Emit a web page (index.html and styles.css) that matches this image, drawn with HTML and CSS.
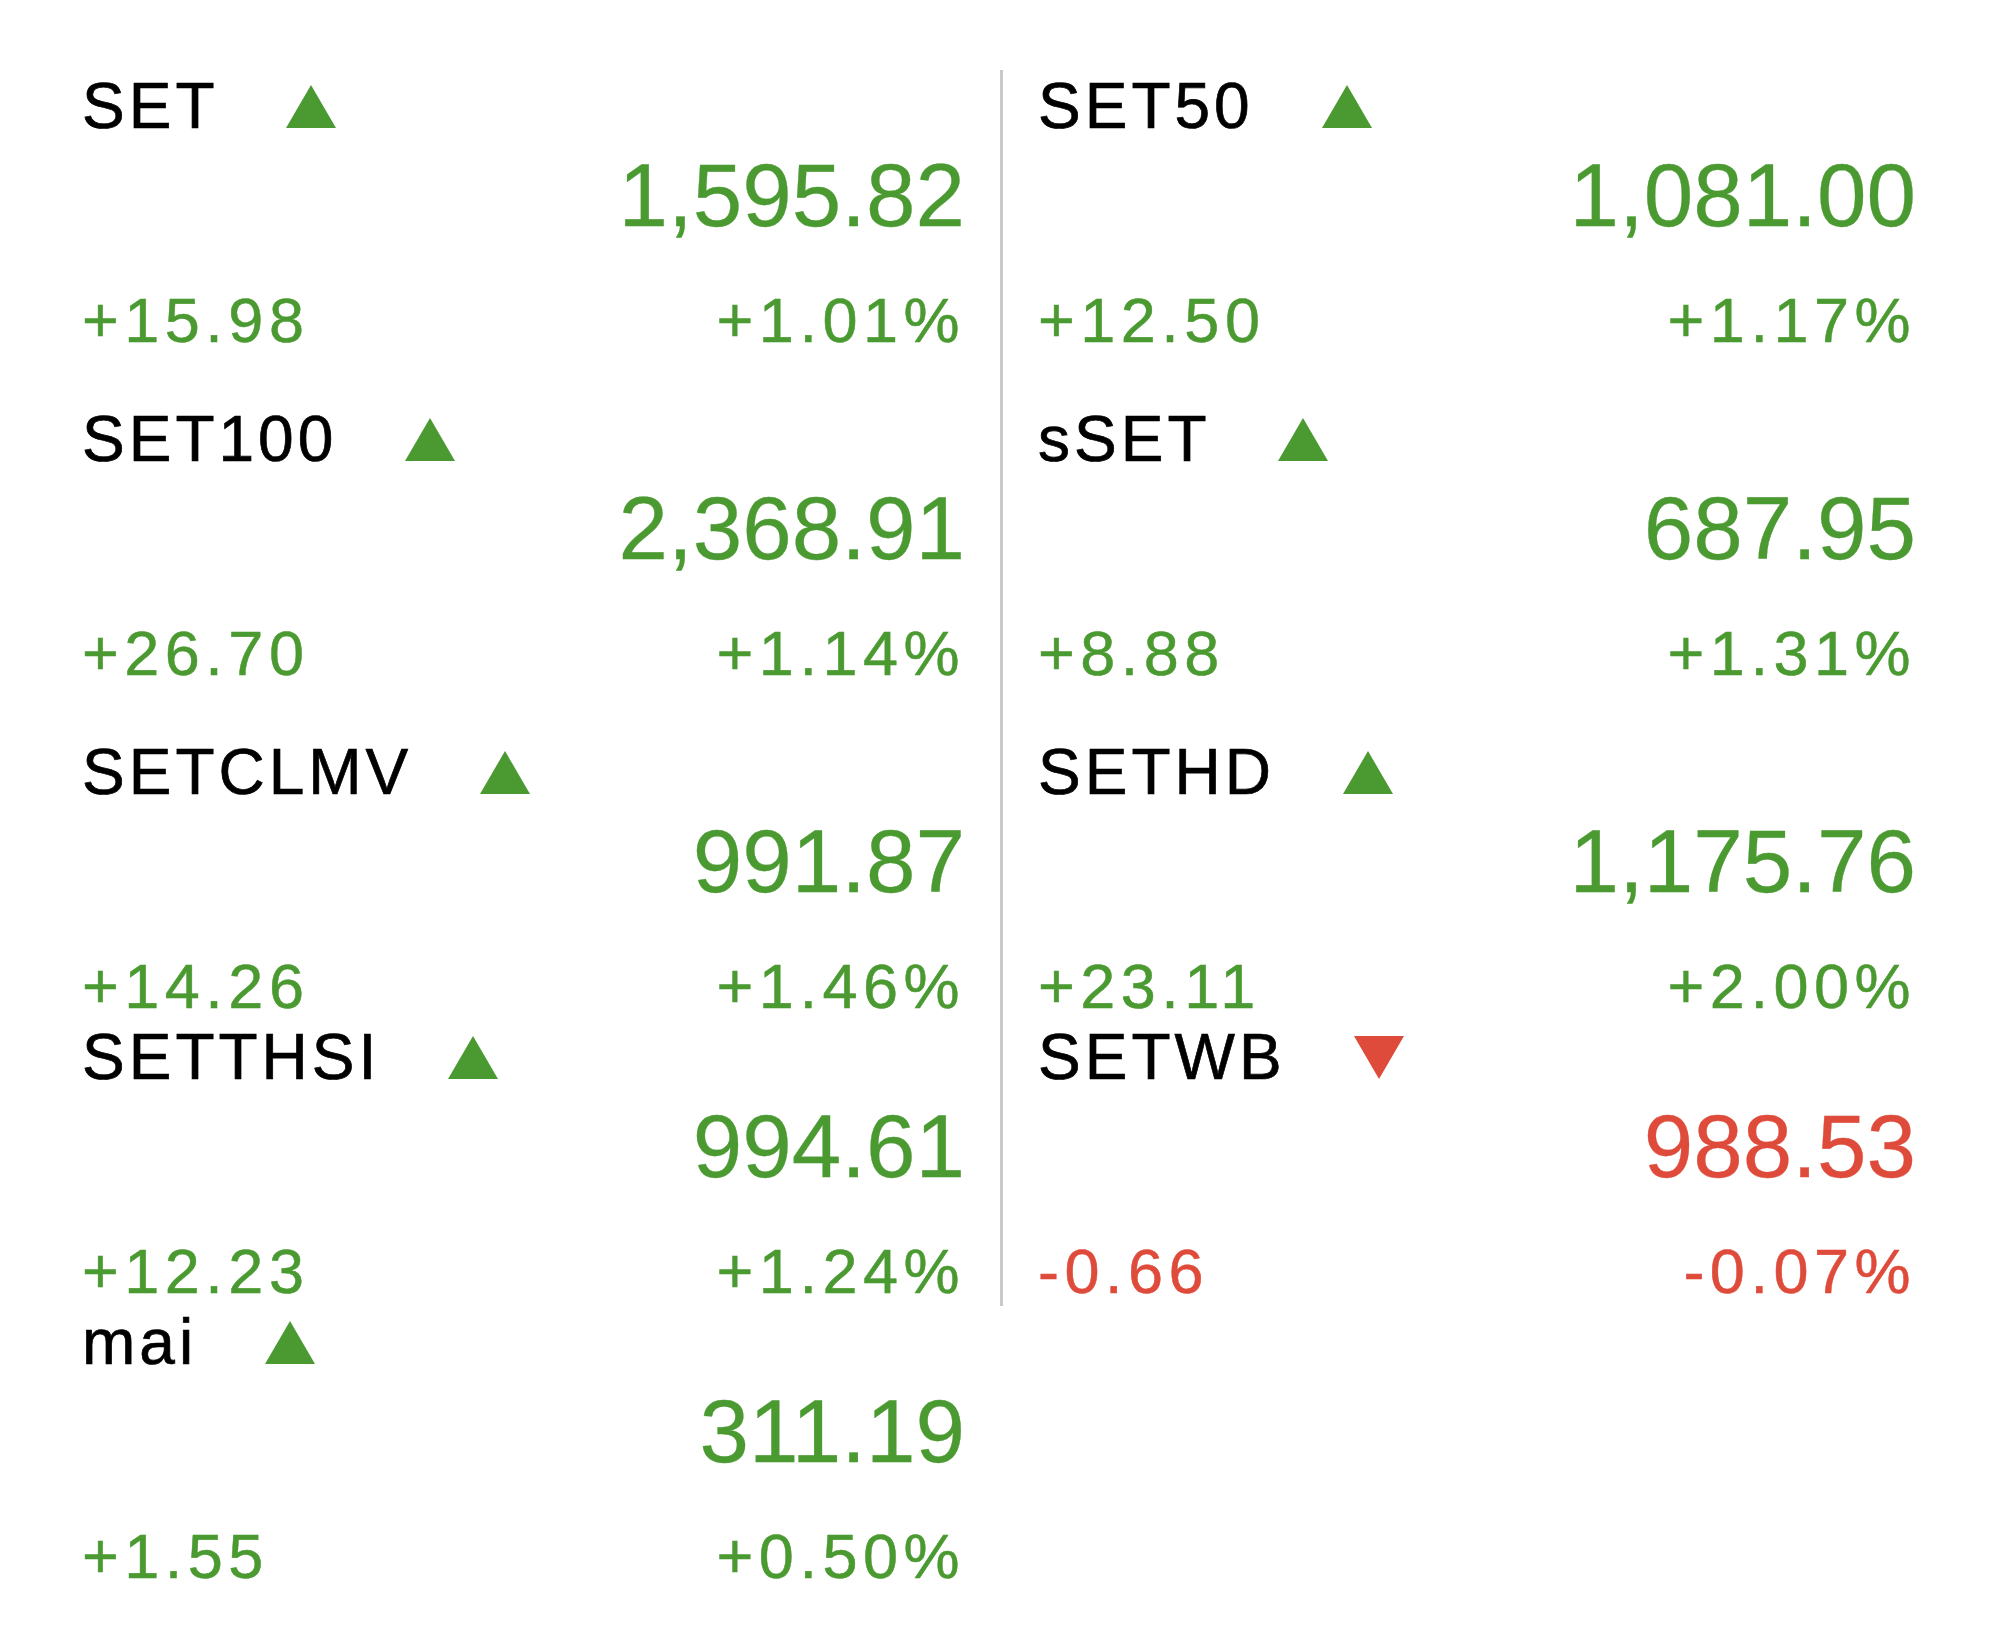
FILE: index.html
```html
<!DOCTYPE html>
<html lang="en">
<head>
<meta charset="utf-8">
<title>SET Indices</title>
<link rel="stylesheet" href="styles.css">
</head>
<body>
<div class="board">
  <div class="col col-left">
    <div class="idx tall up">
      <div class="idx-head"><span class="idx-name">SET</span><svg class="tri" width="50" height="43" viewBox="0 0 50 43"><polygon points="25,0 50,43 0,43"/></svg></div>
      <div class="idx-last">1,595.82</div>
      <div class="idx-chg"><span>+15.98</span><span>+1.01%</span></div>
    </div>
    <div class="idx tall up">
      <div class="idx-head"><span class="idx-name">SET100</span><svg class="tri" width="50" height="43" viewBox="0 0 50 43"><polygon points="25,0 50,43 0,43"/></svg></div>
      <div class="idx-last">2,368.91</div>
      <div class="idx-chg"><span>+26.70</span><span>+1.14%</span></div>
    </div>
    <div class="idx up">
      <div class="idx-head"><span class="idx-name">SETCLMV</span><svg class="tri" width="50" height="43" viewBox="0 0 50 43"><polygon points="25,0 50,43 0,43"/></svg></div>
      <div class="idx-last">991.87</div>
      <div class="idx-chg"><span>+14.26</span><span>+1.46%</span></div>
    </div>
    <div class="idx up">
      <div class="idx-head"><span class="idx-name">SETTHSI</span><svg class="tri" width="50" height="43" viewBox="0 0 50 43"><polygon points="25,0 50,43 0,43"/></svg></div>
      <div class="idx-last">994.61</div>
      <div class="idx-chg"><span>+12.23</span><span>+1.24%</span></div>
    </div>
    <div class="idx up">
      <div class="idx-head"><span class="idx-name">mai</span><svg class="tri" width="50" height="43" viewBox="0 0 50 43"><polygon points="25,0 50,43 0,43"/></svg></div>
      <div class="idx-last">311.19</div>
      <div class="idx-chg"><span>+1.55</span><span>+0.50%</span></div>
    </div>
  </div>
  <div class="col col-right">
    <div class="idx tall up">
      <div class="idx-head"><span class="idx-name">SET50</span><svg class="tri" width="50" height="43" viewBox="0 0 50 43"><polygon points="25,0 50,43 0,43"/></svg></div>
      <div class="idx-last">1,081.00</div>
      <div class="idx-chg"><span>+12.50</span><span>+1.17%</span></div>
    </div>
    <div class="idx tall up">
      <div class="idx-head"><span class="idx-name">sSET</span><svg class="tri" width="50" height="43" viewBox="0 0 50 43"><polygon points="25,0 50,43 0,43"/></svg></div>
      <div class="idx-last">687.95</div>
      <div class="idx-chg"><span>+8.88</span><span>+1.31%</span></div>
    </div>
    <div class="idx up">
      <div class="idx-head"><span class="idx-name">SETHD</span><svg class="tri" width="50" height="43" viewBox="0 0 50 43"><polygon points="25,0 50,43 0,43"/></svg></div>
      <div class="idx-last">1,175.76</div>
      <div class="idx-chg"><span>+23.11</span><span>+2.00%</span></div>
    </div>
    <div class="idx down">
      <div class="idx-head"><span class="idx-name">SETWB</span><svg class="tri" width="50" height="43" viewBox="0 0 50 43"><polygon points="0,0 50,0 25,43"/></svg></div>
      <div class="idx-last">988.53</div>
      <div class="idx-chg"><span>-0.66</span><span>-0.07%</span></div>
    </div>
  </div>
</div>
</body>
</html>
```

FILE: styles.css
```css
html, body {
  margin: 0;
  padding: 0;
  background: #ffffff;
}

body {
  font-family: "Liberation Sans", Arial, Helvetica, sans-serif;
  color: #000000;
}

.board {
  display: flex;
  align-items: flex-start;
  padding: 70px 0 0 82px;
}

.col-left {
  width: 883px;
  margin-right: 35px;
}

.col-right {
  width: 878px;
  border-left: 3px solid #c9c9c9;
  padding-left: 35px;
}

.idx {
  display: flex;
  flex-direction: column;
}

.idx.tall {
  padding-bottom: 48px;
}

.idx-head {
  height: 72px;
  line-height: 72px;
  white-space: nowrap;
}

.idx-name {
  font-size: 64px;
  letter-spacing: 4px;
  color: #000000;
  -webkit-text-stroke: 0.7px #000000;
}

.tri {
  vertical-align: baseline;
  margin-left: 68px;
}

.idx-last {
  font-size: 89px;
  line-height: 106px;
  text-align: right;
  -webkit-text-stroke: 0.3px currentColor;
}

.idx-chg {
  display: flex;
  justify-content: space-between;
  margin-top: 37px;
  font-size: 63px;
  line-height: 70px;
  letter-spacing: 5.5px;
  -webkit-text-stroke: 0.5px currentColor;
}

.up .tri { fill: #4a9a31; }
.up .idx-last,
.up .idx-chg { color: #4a9a31; }

.down .tri { fill: #df4b3b; }
.down .idx-last,
.down .idx-chg { color: #df4b3b; }
```
